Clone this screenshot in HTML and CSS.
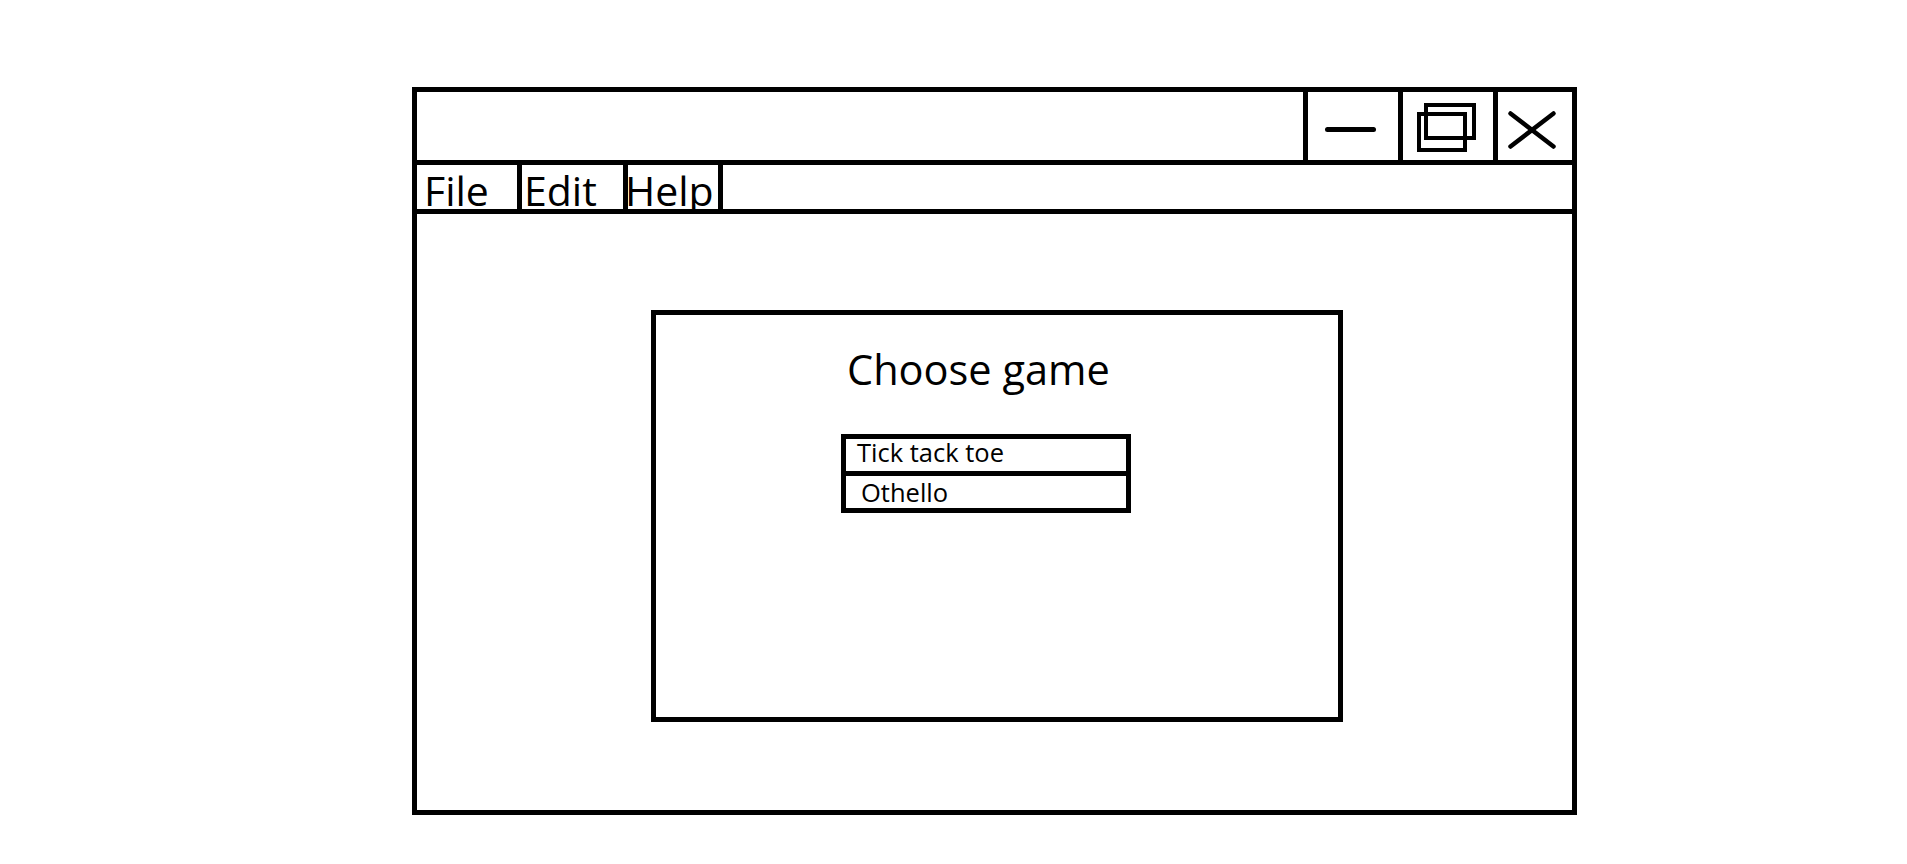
FILE: index.html
```html
<!DOCTYPE html>
<html lang="en">
<head>
<meta charset="utf-8">
<title>Choose game</title>
<link rel="stylesheet" href="styles.css">
</head>
<body>
<div class="window">
  <div class="titlebar">
    <div class="tbtn tbtn-min">
      <svg width="90" height="68" viewBox="0 0 90 68"><line x1="19.5" y1="37.5" x2="65.5" y2="37.5" stroke="#000" stroke-width="5" stroke-linecap="round"/></svg>
    </div>
    <div class="tbtn tbtn-max">
      <svg width="90" height="68" viewBox="0 0 90 68">
        <rect x="23" y="13" width="48" height="33" fill="none" stroke="#000" stroke-width="4"/>
        <rect x="16" y="22" width="46" height="36" fill="none" stroke="#000" stroke-width="4"/>
      </svg>
    </div>
    <div class="tbtn tbtn-close">
      <svg width="74" height="68" viewBox="0 0 74 68">
        <line x1="12.5" y1="21.5" x2="55.5" y2="54.5" stroke="#000" stroke-width="4.5" stroke-linecap="round"/>
        <line x1="55.5" y1="21.5" x2="12.5" y2="54.5" stroke="#000" stroke-width="4.5" stroke-linecap="round"/>
      </svg>
    </div>
  </div>
  <div class="menubar">
    <div class="menu-item menu-file">File</div>
    <div class="menu-item menu-edit">Edit</div>
    <div class="menu-item menu-help">Help</div>
  </div>
  <div class="content">
    <div class="dialog">
      <div class="dialog-title">Choose game</div>
      <div class="list">
        <div class="list-row list-row-first">Tick tack toe</div>
        <div class="list-row list-row-second">Othello</div>
      </div>
    </div>
  </div>
</div>
</body>
</html>
```
FILE: styles.css
```css
* { box-sizing: border-box; }
html, body {
  margin: 0;
  padding: 0;
  background: #fff;
}
body {
  font-family: "Open Sans", "Noto Sans", sans-serif;
  color: #000;
  padding: 87px 0 0 412px;
}
.window {
  width: 1165px;
  height: 728px;
  border: 5px solid #000;
  display: flex;
  flex-direction: column;
}
.titlebar {
  height: 73px;
  border-bottom: 5px solid #000;
  display: flex;
  justify-content: flex-end;
  flex: none;
}
.tbtn {
  height: 68px;
  border-left: 5px solid #000;
  overflow: hidden;
}
.tbtn svg { display: block; }
.tbtn-min { width: 95px; }
.tbtn-max { width: 95px; }
.tbtn-close { width: 79px; }

.menubar {
  height: 49px;
  border-bottom: 5px solid #000;
  display: flex;
  flex: none;
}
.menu-item {
  height: 44px;
  border-right: 5px solid #000;
  font-size: 41px;
  line-height: 44px;
  padding-top: 3px;
  overflow: hidden;
  white-space: nowrap;
}
.menu-file { width: 105px; padding-left: 7px; }
.menu-edit { width: 106px; padding-left: 2px; }
.menu-help { width: 95px; text-indent: -3px; }

.content {
  flex: 1;
  padding: 96px 0 0 234px;
}
.dialog {
  width: 692px;
  height: 412px;
  border: 5px solid #000;
  padding: 34px 0 0 191px;
}
.dialog-title {
  font-size: 41.5px;
  line-height: 40px;
  white-space: nowrap;
}
.list {
  margin: 45px 0 0 -6px;
  width: 290px;
  border: 5px solid #000;
}
.list-row {
  height: 32px;
  font-size: 25.5px;
  line-height: 26px;
  white-space: nowrap;
}
.list-row-first {
  padding-left: 11px;
  border-bottom: 5px solid #000;
  height: 37px;
}
.list-row-second {
  padding-left: 15px;
  padding-top: 3px;
}
```
